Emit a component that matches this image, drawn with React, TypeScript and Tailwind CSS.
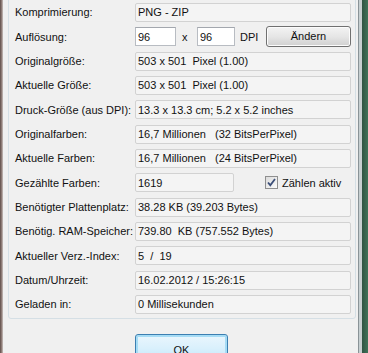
import React from 'react';

type Info = { label: string; value: string };

const rowsTop: Info[] = [
  { label: 'Originalgröße:', value: '503 x 501  Pixel (1.00)' },
  { label: 'Aktuelle Größe:', value: '503 x 501  Pixel (1.00)' },
  { label: 'Druck-Größe (aus DPI):', value: '13.3 x 13.3 cm; 5.2 x 5.2 inches' },
  { label: 'Originalfarben:', value: '16,7 Millionen   (32 BitsPerPixel)' },
  { label: 'Aktuelle Farben:', value: '16,7 Millionen   (24 BitsPerPixel)' },
];

const rowsBottom: Info[] = [
  { label: 'Benötigter Plattenplatz:', value: '38.28 KB (39.203 Bytes)' },
  { label: 'Benötig. RAM-Speicher:', value: '739.80  KB (757.552 Bytes)' },
  { label: 'Aktueller Verz.-Index:', value: '5  /  19' },
  { label: 'Datum/Uhrzeit:', value: '16.02.2012 / 15:26:15' },
  { label: 'Geladen in:', value: '0 Millisekunden' },
];

function Label({ children }: { children: React.ReactNode }) {
  return <div className="w-[120px] shrink-0 whitespace-nowrap">{children}</div>;
}

function ReadField({ children, className = 'flex-1' }: { children: React.ReactNode; className?: string }) {
  return (
    <div className={`${className} h-[19px] flex items-center px-[2px] whitespace-pre rounded-[2px] border border-[#d2d2d2] bg-[#f4f4f4]`}>
      {children}
    </div>
  );
}

function Row({ label, children }: { label: string; children: React.ReactNode }) {
  return (
    <div className="flex items-center h-[19px]">
      <Label>{label}</Label>
      {children}
    </div>
  );
}

export default function App() {
  return (
    <div className="w-[368px] h-[353px] overflow-hidden flex bg-[#f0f0f0] text-[11px] text-[#111] font-['Liberation_Sans',Arial,sans-serif]">
      {/* left window frame */}
      <div className="w-[3px] shrink-0 bg-gradient-to-r from-[#5e4c48] via-[#8d7b76] to-[#c9c2bf]" />

      <div className="flex-1 flex flex-col pl-[5px] pr-[2px]">
        {/* Group box (top edge is off-screen) */}
        <div className="-mt-[20px] pt-[22px] pb-[4px] pl-[6px] pr-[4px] border border-[#d5dfe5] rounded-[3px] flex flex-col gap-[5.33px]">
          <Row label="Komprimierung:">
            <ReadField>PNG - ZIP</ReadField>
          </Row>

          <Row label="Auflösung:">
            <div className="w-[41px] h-[19px] flex items-center px-[2px] bg-white border border-[#b8bcc2] border-t-[#a3a7ae]">96</div>
            <span className="ml-[6px] w-[10px]">x</span>
            <div className="ml-[5px] w-[38px] h-[19px] flex items-center px-[2px] bg-white border border-[#b8bcc2] border-t-[#a3a7ae]">96</div>
            <span className="ml-[5px]">DPI</span>
            <button className="ml-auto w-[85px] h-[21px] rounded-[3px] border border-[#707070] bg-gradient-to-b from-[#f3f3f3] via-[#e6e6e6] to-[#d0d0d0] shadow-[inset_0_0_0_1px_#fcfcfc] text-[11px] leading-none">
              Ändern
            </button>
          </Row>

          {rowsTop.map((r) => (
            <Row key={r.label} label={r.label}>
              <ReadField>{r.value}</ReadField>
            </Row>
          ))}

          <Row label="Gezählte Farben:">
            <ReadField className="w-[99px]">1619</ReadField>
            <div className="ml-[31px] flex items-center gap-[4px]">
              <div className="w-[13px] h-[13px] border border-[#8f8f8f] bg-gradient-to-br from-[#dcdcdc] to-[#fbfbfb] flex items-center justify-center">
                <svg width="11" height="11" viewBox="0 0 11 11">
                  <path d="M2 5.5 L4.3 8.2 L9 2" fill="none" stroke="#3c4f78" strokeWidth="1.8" />
                </svg>
              </div>
              <span>Zählen aktiv</span>
            </div>
          </Row>

          {rowsBottom.map((r) => (
            <Row key={r.label} label={r.label}>
              <ReadField>{r.value}</ReadField>
            </Row>
          ))}
        </div>

        <div className="flex mt-[15px] pl-[127px]">
          <button className="w-[93px] h-[29px] shrink-0 rounded-[3px] border border-[#3c7fb1] bg-gradient-to-b from-[#eaf6fd] via-[#d9f0fc] to-[#bee6fd] shadow-[inset_0_0_0_2px_#a6dcf5] text-[11px] pt-[3px]">
            OK
          </button>
        </div>
      </div>

      {/* right window frame */}
      <div className="w-[10px] shrink-0 flex">
        <div className="w-[1px] bg-[#8a9397]" />
        <div className="w-[3px] bg-[#c6cfd1]" />
        <div className="flex-1 bg-gradient-to-r from-[#2f5443] to-[#3f7359]" />
      </div>
    </div>
  );
}
